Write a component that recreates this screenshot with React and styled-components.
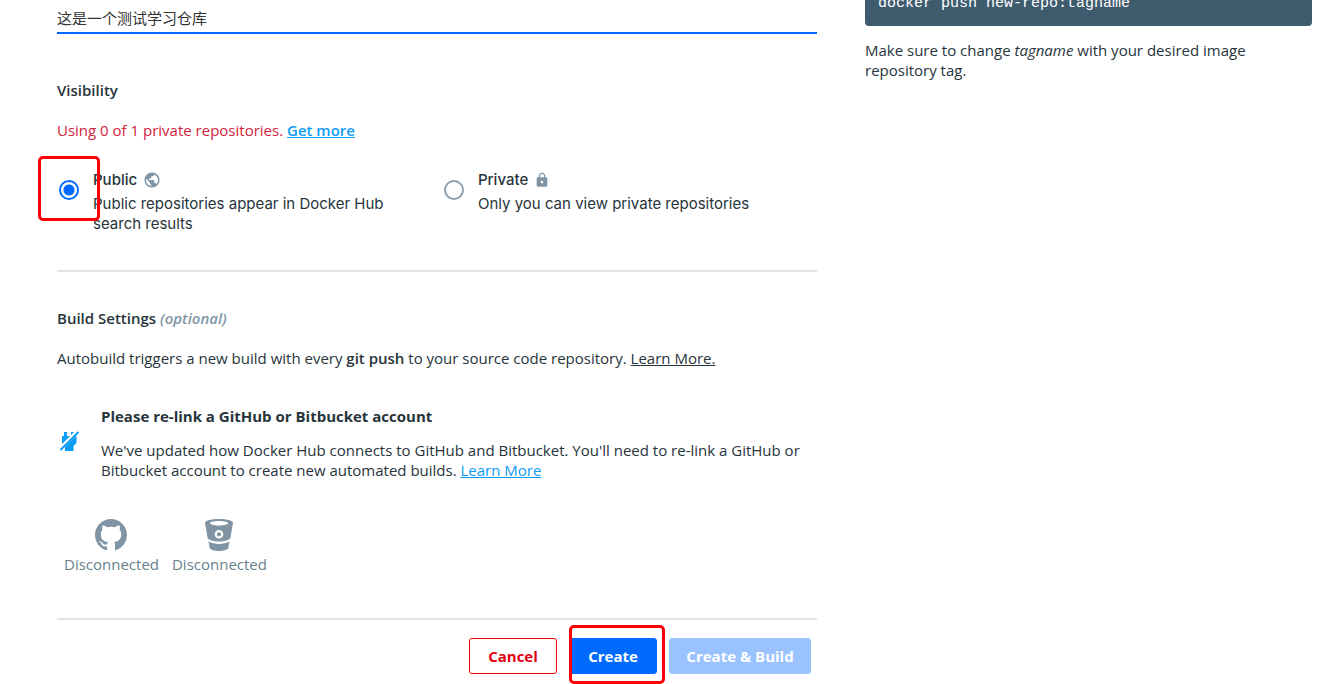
import React, { useState } from 'react';
import styled, { createGlobalStyle } from 'styled-components';
import { MdPublic, MdLock } from 'react-icons/md';

const GlobalStyle = createGlobalStyle`
  * { box-sizing: border-box; }
  body {
    margin: 0;
    background: #fff;
    color: #27343b;
    font: 15px/20px "Open Sans", "Noto Sans CJK SC", sans-serif;
  }
  h2, h3, p { margin: 0; }
  b { font-weight: 600; }
`;

const Page = styled.main`
  display: grid;
  grid-template-columns: minmax(0, 760fr) minmax(0, 447fr);
  gap: 48px;
  padding: 0 11px 0 57px;
`;

const DescriptionInput = styled.input`
  display: block;
  width: 100%;
  height: 34px;
  padding: 2px 0 0;
  border: 0;
  border-bottom: 2px solid #006aff;
  outline: 0;
  color: #333;
  font: 15px/20px "Noto Sans CJK SC", sans-serif;
`;

const Section = styled.section`
  padding: ${(p) => p.$pad};
  border-bottom: 2px solid #e1e4e7;
`;

const Heading = styled.h2`
  font-size: 15px;
  line-height: 20px;
  font-weight: 600;
  margin-bottom: 20px;

  em { color: #8296a4; }
`;

const Warning = styled.p`
  color: #d0243c;
`;

const Link = styled.a`
  color: ${(p) => (p.$plain ? 'inherit' : '#0d9cf5')};
  font-weight: ${(p) => (p.$strong ? 600 : 400)};
  text-decoration: underline;
`;

const Options = styled.fieldset`
  display: grid;
  grid-template-columns: 1fr 1fr;
  gap: 10px;
  margin: 0;
  padding: 30px 0 0;
  border: 0;
`;

const Option = styled.div`
  display: flex;
  align-items: flex-start;
  gap: 14px;
  padding-left: 2px;
`;

const RadioWrap = styled.div`
  position: relative;
  display: flex;
  margin-top: 10px;
`;

const Radio = styled.input`
  appearance: none;
  width: 20px;
  height: 20px;
  margin: 0;
  border: 2px solid #8d9fae;
  border-radius: 50%;

  &:checked {
    border-color: #006aff;
    background: radial-gradient(circle, #006aff 5px, transparent 6px);
  }
`;

const OptionLabel = styled.label`
  flex: 1;
  font-family: Inter, sans-serif;
`;

const OptionTitle = styled.span`
  display: flex;
  align-items: center;
  gap: 6px;
  margin-bottom: 4px;
  font-weight: 500;

  svg { color: #8194a3; }
`;

const Marker = styled.span`
  position: absolute;
  inset: ${(p) => p.$inset};
  border: 3px solid #fb0007;
  border-radius: 5px;
  pointer-events: none;
`;

const Notice = styled.div`
  display: flex;
  align-items: center;
  gap: 20px;
  padding: 38px 0 0 0;

  svg { flex: none; }
`;

const NoticeTitle = styled.h3`
  font-size: 15px;
  line-height: 20px;
  font-weight: 700;
  margin-bottom: 14px;
`;

const Providers = styled.div`
  display: flex;
  gap: 13px;
  padding: 39px 7px 0;
`;

const Provider = styled.div`
  display: flex;
  flex-direction: column;
  align-items: center;
  gap: 3px;
  color: #677f8e;

  svg { fill: #8194a3; }
`;

const Actions = styled.div`
  display: flex;
  justify-content: flex-end;
  gap: 12px;
  padding: 18px 6px 10px;
`;

const ButtonWrap = styled.div`
  position: relative;
`;

const Button = styled.button`
  height: 36px;
  min-width: ${(p) => (p.$wide ? '142px' : '88px')};
  padding: 0 16px;
  border: 1px solid ${(p) => p.$edge};
  border-radius: 3px;
  background: ${(p) => p.$fill};
  color: ${(p) => p.$ink};
  font: 700 15px/20px "Open Sans", sans-serif;
`;

const Code = styled.pre`
  margin: -6px 0 14px;
  padding: 0 13px 12px;
  border-radius: 0 0 4px 4px;
  background: #3f5c6f;
  color: #fff;
  font: 15px/20px "Liberation Mono", monospace;
`;

function PlugOff() {
  return (
    <svg width="24" height="24" viewBox="0 0 24 24" aria-hidden="true">
      <path fill="#0d9cf5" d="M7 1h3v4h4V1h3v4h2.500v7l-3 3v5H8v-4l-3-3V5h2z" />
      <path stroke="#fff" strokeWidth="4" d="M2 19L21 0" />
      <path stroke="#0d9cf5" strokeWidth="2" d="M3.500 19L21.500 1" />
    </svg>
  );
}

function GithubMark() {
  return (
    <svg width="32" height="32" viewBox="0 0 16 16" aria-hidden="true">
      <path d="M8 0C3.58 0 0 3.58 0 8c0 3.54 2.29 6.53 5.47 7.59.4.07.55-.17.55-.38 0-.19-.01-.82-.01-1.49-2.01.37-2.53-.49-2.69-.94-.09-.23-.48-.94-.82-1.13-.28-.15-.68-.52-.01-.53.63-.01 1.08.58 1.23.82.72 1.21 1.87.87 2.33.66.07-.52.28-.87.51-1.07-1.78-.2-3.64-.89-3.64-3.95 0-.87.31-1.59.82-2.15-.08-.2-.36-1.02.08-2.12 0 0 .67-.21 2.2.82.64-.18 1.32-.27 2-.27s1.36.09 2 .27c1.53-1.04 2.2-.82 2.2-.82.44 1.1.16 1.92.08 2.12.51.56.82 1.27.82 2.15 0 3.07-1.87 3.75-3.65 3.95.29.25.54.73.54 1.48 0 1.07-.01 1.93-.01 2.2 0 .21.15.46.55.38A8.01 8.01 0 0 0 16 8c0-4.42-3.58-8-8-8z" />
    </svg>
  );
}

function BucketMark() {
  return (
    <svg width="32" height="32" viewBox="0 0 32 32" aria-hidden="true">
      <path fillRule="evenodd" d="M16 0C8 0 2 1.600 2 4l2.600 15c1 2 6 3.500 11.400 3.500s10.400-1.500 11.400-3.500L30 4c0-2.400-6-4-14-4zm0 2c5.500 0 9 1 9 2.200s-3.500 2.200-9 2.200-9-1-9-2.200S10.500 2 16 2zm0 9a4.300 4.300 0 1 1 0 8.600 4.300 4.300 0 0 1 0-8.600zm0 2.200a2.100 2.100 0 1 0 0 4.200 2.100 2.100 0 0 0 0-4.200z" />
      <path d="M5.500 22.500c5.500 3.200 15.500 3.200 21 0L25.300 29c-1.500 4-17.100 4-18.600 0z" />
    </svg>
  );
}

export default function App() {
  const [visibility, setVisibility] = useState('public');
  const [description, setDescription] = useState('这是一个测试学习仓库');
  return (
    <>
      <GlobalStyle />
      <Page>
        <form onSubmit={(e) => e.preventDefault()}>
          <DescriptionInput aria-label="Description" value={description} onChange={(e) => setDescription(e.target.value)} />
          <Section $pad="46px 0 36px">
            <Heading>Visibility</Heading>
            <Warning>
              Using 0 of 1 private repositories. <Link href="#more" $strong>Get more</Link>
            </Warning>
            <Options aria-label="Visibility">
              <Option>
                <RadioWrap>
                  <Radio type="radio" name="visibility" id="public" checked={visibility === 'public'} onChange={() => setVisibility('public')} />
                  <Marker $inset="-24px -21px -21px -21px" />
                </RadioWrap>
                <OptionLabel htmlFor="public">
                  <OptionTitle>Public <MdPublic size={18} /></OptionTitle>
                  Public repositories appear in Docker Hub search results
                </OptionLabel>
              </Option>
              <Option>
                <RadioWrap>
                  <Radio type="radio" name="visibility" id="private" checked={visibility === 'private'} onChange={() => setVisibility('private')} />
                </RadioWrap>
                <OptionLabel htmlFor="private">
                  <OptionTitle>Private <MdLock size={16} /></OptionTitle>
                  Only you can view private repositories
                </OptionLabel>
              </Option>
            </Options>
          </Section>
          <Section $pad="36px 0 44px">
            <Heading>Build Settings <em>(optional)</em></Heading>
            <p>
              Autobuild triggers a new build with every <b>git push</b> to your source code repository.{' '}
              <Link href="#autobuild" $plain>Learn More.</Link>
            </p>
            <Notice>
              <PlugOff />
              <div>
                <NoticeTitle>Please re-link a GitHub or Bitbucket account</NoticeTitle>
                <p>
                  We've updated how Docker Hub connects to GitHub and Bitbucket. You'll need to re-link a GitHub or
                  Bitbucket account to create new automated builds. <Link href="#relink">Learn More</Link>
                </p>
              </div>
            </Notice>
            <Providers>
              <Provider><GithubMark />Disconnected</Provider>
              <Provider><BucketMark />Disconnected</Provider>
            </Providers>
          </Section>
          <Actions>
            <Button type="button" $edge="#ee000b" $fill="#fff" $ink="#e3000f">Cancel</Button>
            <ButtonWrap>
              <Button type="submit" $edge="#006aff" $fill="#006aff" $ink="#fff">Create</Button>
              <Marker $inset="-13px -8px -10px 0" />
            </ButtonWrap>
            <Button type="button" disabled $wide $edge="#99c2ff" $fill="#99c2ff" $ink="#fff">Create &amp; Build</Button>
          </Actions>
        </form>
        <aside>
          <Code>docker push new-repo:tagname</Code>
          <p>Make sure to change <em>tagname</em> with your desired image repository tag.</p>
        </aside>
      </Page>
    </>
  );
}
